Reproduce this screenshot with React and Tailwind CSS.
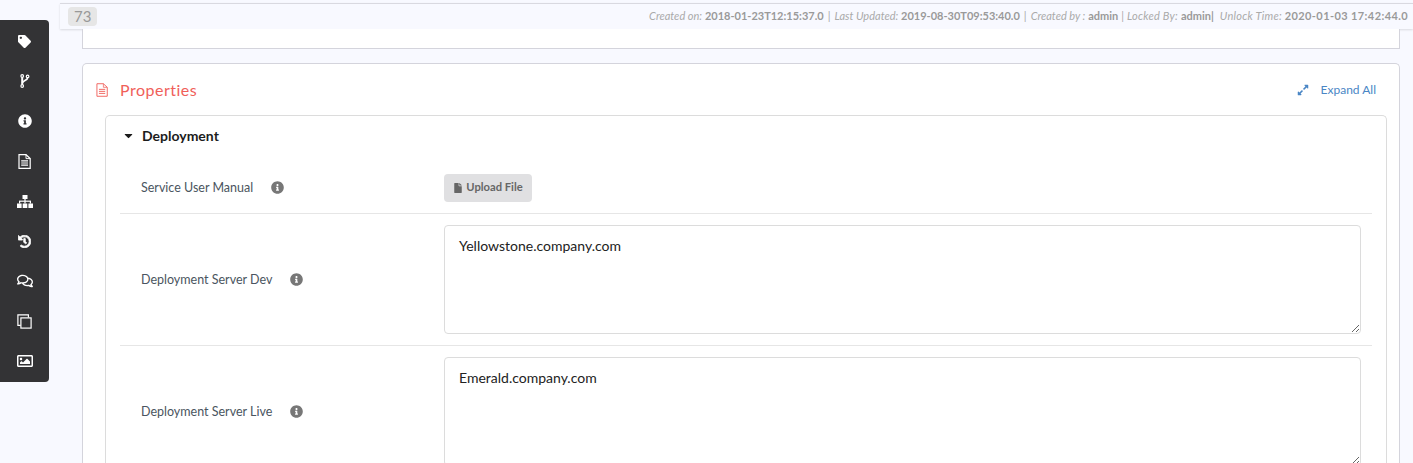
import React from "react";
import { FaTag, FaInfoCircle, FaHistory, FaRegComments, FaRegImage, FaExpandAlt, FaFile, FaCaretDown } from "react-icons/fa";

function ForkIcon() {
  return (
    <svg width="10" height="14" viewBox="0 0 10 14" fill="none" stroke="currentColor">
      <circle cx="2.2" cy="2" r="1.3" strokeWidth="1.2" />
      <circle cx="7.6" cy="2.4" r="1.3" strokeWidth="1.2" />
      <circle cx="2.2" cy="12" r="1.3" strokeWidth="1.2" />
      <path d="M2.2 3.3V10.7" strokeWidth="2" />
      <path d="M7.6 3.7C7.6 6.5 2.8 6.5 2.4 9" strokeWidth="1.7" />
    </svg>
  );
}

function FileIcon({ className, w = 13, h = 15, sw = 1.2 }) {
  return (
    <svg width={w} height={h} viewBox="0 0 13 15" fill="none" stroke="currentColor" className={className}>
      <path d="M1 .7H8L12.2 4.6V14.3H1Z" strokeWidth={sw} />
      <path d="M8 .7V4.6H12.2" strokeWidth={sw * 0.8} />
      <path d="M3.2 6.8H10M3.2 9H10M3.2 11.2H10" strokeWidth={sw} />
    </svg>
  );
}

function SitemapIcon() {
  return (
    <svg width="16" height="13" viewBox="0 0 16 13" fill="currentColor">
      <rect x="5.5" y="0" width="5" height="4" />
      <rect x="7.4" y="4" width="1.2" height="2" />
      <rect x="2" y="5.6" width="12" height="1.2" />
      <rect x="2" y="6" width="1.2" height="2.5" />
      <rect x="7.4" y="6" width="1.2" height="2.5" />
      <rect x="12.8" y="6" width="1.2" height="2.5" />
      <rect x="0" y="8.5" width="4.6" height="4.5" />
      <rect x="5.7" y="8.5" width="4.6" height="4.5" />
      <rect x="11.4" y="8.5" width="4.6" height="4.5" />
    </svg>
  );
}

function CloneIcon() {
  return (
    <svg width="15" height="15" viewBox="0 0 15 15" fill="none" stroke="currentColor" strokeWidth="1.2">
      <path d="M3.6 11.4H.9V.9H11.4V3.6" />
      <rect x="3.9" y="3.9" width="10.2" height="10.2" />
    </svg>
  );
}

const railIcons = [
  <FaTag size={13} />,
  <ForkIcon />,
  <FaInfoCircle size={14} />,
  <FileIcon />,
  <SitemapIcon />,
  <FaHistory size={13} strokeWidth={30} />,
  <FaRegComments size={16} />,
  <CloneIcon />,
  <FaRegImage size={16} />,
];

function Meta({ label, value, labelClass, className }) {
  return (
    <>
      <em className={labelClass}>{label}</em> <b className={`font-bold text-[#9a9a9a] ${className || ""}`}>{value}</b>
    </>
  );
}

function Label({ text, gap }) {
  return (
    <div className="flex w-[324px] shrink-0 items-center pl-[21px] text-[12.5px] text-[#4a5560]">
      <span className="pt-[1px]">{text}</span>
      <FaInfoCircle size={13} className="text-[#777]" style={{ marginLeft: gap }} />
    </div>
  );
}

function FieldRow({ label, gap, value, last }) {
  return (
    <div className={`flex items-center py-[11px] ${last ? "" : "border-b border-[#e6e6e6]"}`}>
      <Label text={label} gap={gap} />
      <textarea
        readOnly
        defaultValue={value}
        className="h-[109px] w-[917px] shrink-0 rounded-[4px] border border-[#dcdcdc] bg-white px-[14px] py-[10px] text-[14px] leading-[20px] text-[#222] outline-none"
      />
    </div>
  );
}

export default function App() {
  return (
    <div className="relative h-[463px] overflow-hidden bg-[#f8f9ff] font-['Lato',sans-serif]">
      <nav className="absolute left-0 top-[20px] z-10 flex h-[362px] w-[49px] flex-col items-center rounded-r-[4px] bg-[#333335] pt-[1px] text-white">
        {railIcons.map((icon, i) => (
          <div key={i} className="flex h-[40px] w-full items-center justify-center">
            {icon}
          </div>
        ))}
      </nav>

      <div className="ml-[60px]">
        <header className="mt-[3px] flex h-[26px] items-center justify-between border-t border-[#d9d9e0] pl-[8px] pr-[5px] shadow-[0_1px_2px_rgba(0,0,0,0.12)]">
          <span className="rounded-[4px] bg-[#e6e6e6] px-[6px] text-[15px] leading-[19px] text-[#999]">73</span>
          <p className="text-[11px] text-[#aaa]">
            <Meta label="Created on:" value="2018-01-23T12:15:37.0" />
            <span className="mx-[4px]">|</span>
            <Meta label="Last Updated:" value="2019-08-30T09:53:40.0" />
            <span className="mx-[4px]">|</span>
            <Meta label="Created by :" value="admin" />
            <span className="mx-[3px]">|</span>
            <Meta label="Locked By:" value="admin|" labelClass="tracking-[0.25px]" />
            <span className="ml-[6px]" />
            <Meta label="Unlock Time:" value="2020-01-03 17:42:44.0" labelClass="tracking-[0.25px]" className="tracking-[0.4px]" />
          </p>
        </header>

        <div className="ml-[22px] w-[1318px]">
          <div className="h-[20px] border border-t-0 border-[#d4d4dc] bg-white" />

          <section className="mt-[14px] rounded-t-[5px] border border-b-0 border-[#d4d4dc] bg-white pl-[22px] pr-[12px]">
            <div className="flex h-[51px] items-center justify-between pr-[11px]">
              <h2 className="-ml-[9px] flex items-center text-[16px] tracking-[0.5px] text-[#f0605a]">
                <FileIcon w={12} h={14} sw={1} className="mr-[12px]" />
                Properties
              </h2>
              <a className="flex items-center text-[12px] text-[#4a86c5]">
                <FaExpandAlt size={12} className="mr-[12px]" />
                Expand All
              </a>
            </div>

            <div className="rounded-t-[5px] border border-b-0 border-[#dcdcdc] px-[14px]">
              <div className="flex h-[38px] items-center text-[14px] font-bold text-[#1c1c1c]">
                <FaCaretDown size={13} className="ml-[2px] mr-[7px]" />
                Deployment
              </div>
              <div className="flex h-[60px] items-center border-b border-[#e6e6e6] pt-[8px]">
                <Label text="Service User Manual" gap={18} />
                <button className="flex h-[28px] w-[88px] items-center justify-center rounded-[4px] bg-[#e0e0e2] text-[11.2px] font-bold text-[#666]">
                  <FaFile size={10} className="mr-[3px]" />
                  Upload File
                </button>
              </div>
              <FieldRow label="Deployment Server Dev" gap={18} value="Yellowstone.company.com" />
              <FieldRow label="Deployment Server Live" gap={18} value="Emerald.company.com" last />
            </div>
          </section>
        </div>
      </div>
    </div>
  );
}
